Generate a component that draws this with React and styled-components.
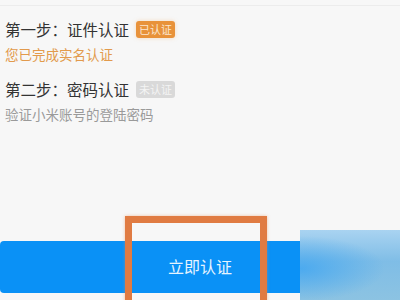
import styled, { createGlobalStyle } from 'styled-components'

const GlobalStyle = createGlobalStyle`
    html, body {
        margin: 0;
        padding: 0;
        background: #f7f7f7;
        font-family: "Noto Sans CJK SC", "Noto Sans", sans-serif;
    }
`

const steps = [
    { title: '第一步：证件认证', badge: '已认证', done: true, note: '您已完成实名认证' },
    { title: '第二步：密码认证', badge: '未认证', done: false, note: '验证小米账号的登陆密码' },
]

function App() {
    return (
        <>
            <GlobalStyle />
            <Page>
                <TopRule />
                <StepList>
                    {steps.map(step => (
                        <Step key={step.title}>
                            <TitleRow>
                                <Title>{step.title}</Title>
                                <Badge $done={step.done}>{step.badge}</Badge>
                            </TitleRow>
                            <Note $done={step.done}>{step.note}</Note>
                        </Step>
                    ))}
                </StepList>
                <Footer>
                    <SubmitButton>立即认证</SubmitButton>
                </Footer>
                <Highlight />
                <Watermark />
            </Page>
        </>
    )
}

const Page = styled.div`
    position: relative;
    width: 400px;
    height: 300px;
    overflow: hidden;
    display: flex;
    flex-direction: column;
    background: #f7f7f7;
`

const TopRule = styled.div`
    margin-top: 5px;
    height: 1px;
    background: #ececec;
`

const StepList = styled.div`
    display: flex;
    flex-direction: column;
    gap: 15px;
    padding: 12px 0 0 5px;
`

const Step = styled.div`
    display: flex;
    flex-direction: column;
    gap: 5px;
`

const TitleRow = styled.div`
    display: flex;
    align-items: center;
    gap: 7px;
    height: 22px;
`

const Title = styled.span`
    font-size: 15.5px;
    line-height: 22px;
    color: #333;
`

const Badge = styled.span`
    display: inline-flex;
    align-items: center;
    justify-content: center;
    width: 39px;
    height: 17px;
    border-radius: 3px;
    font-size: 11px;
    color: ${p => (p.$done ? '#fbe6cf' : '#f4f4f4')};
    background: ${p => (p.$done ? '#e8923a' : '#d9d9d9')};
    box-shadow: ${p => (p.$done ? '0 0 4px rgba(240, 160, 80, 0.35)' : 'none')};
`

const Note = styled.span`
    font-size: 13.5px;
    line-height: 18px;
    color: ${p => (p.$done ? '#e29a4c' : '#9a9a9a')};
`

const Footer = styled.div`
    margin-top: auto;
    padding-bottom: 7px;
`

const SubmitButton = styled.button`
    display: flex;
    align-items: center;
    justify-content: center;
    width: 100%;
    height: 52px;
    border: none;
    border-radius: 4px;
    background: #0a91f6;
    color: #e6f4ff;
    font-family: inherit;
    font-size: 16px;
    padding: 0 0 2px 0;
`

const Highlight = styled.div`
    position: absolute;
    left: 125px;
    top: 216px;
    width: 128px;
    height: 100px;
    border: 7px solid #e07b42;
    box-shadow: 0 0 3px rgba(240, 140, 80, 0.5);
`

const Watermark = styled.div`
    position: absolute;
    left: 300px;
    top: 230px;
    width: 100px;
    height: 70px;
    background:
        radial-gradient(ellipse at 0% 55%, rgba(70, 168, 240, 0.9), rgba(70, 168, 240, 0) 60%),
        linear-gradient(180deg, #a9d3f1 0%, #7fbde6 45%, #8cc3e2 100%);
`

export default App
